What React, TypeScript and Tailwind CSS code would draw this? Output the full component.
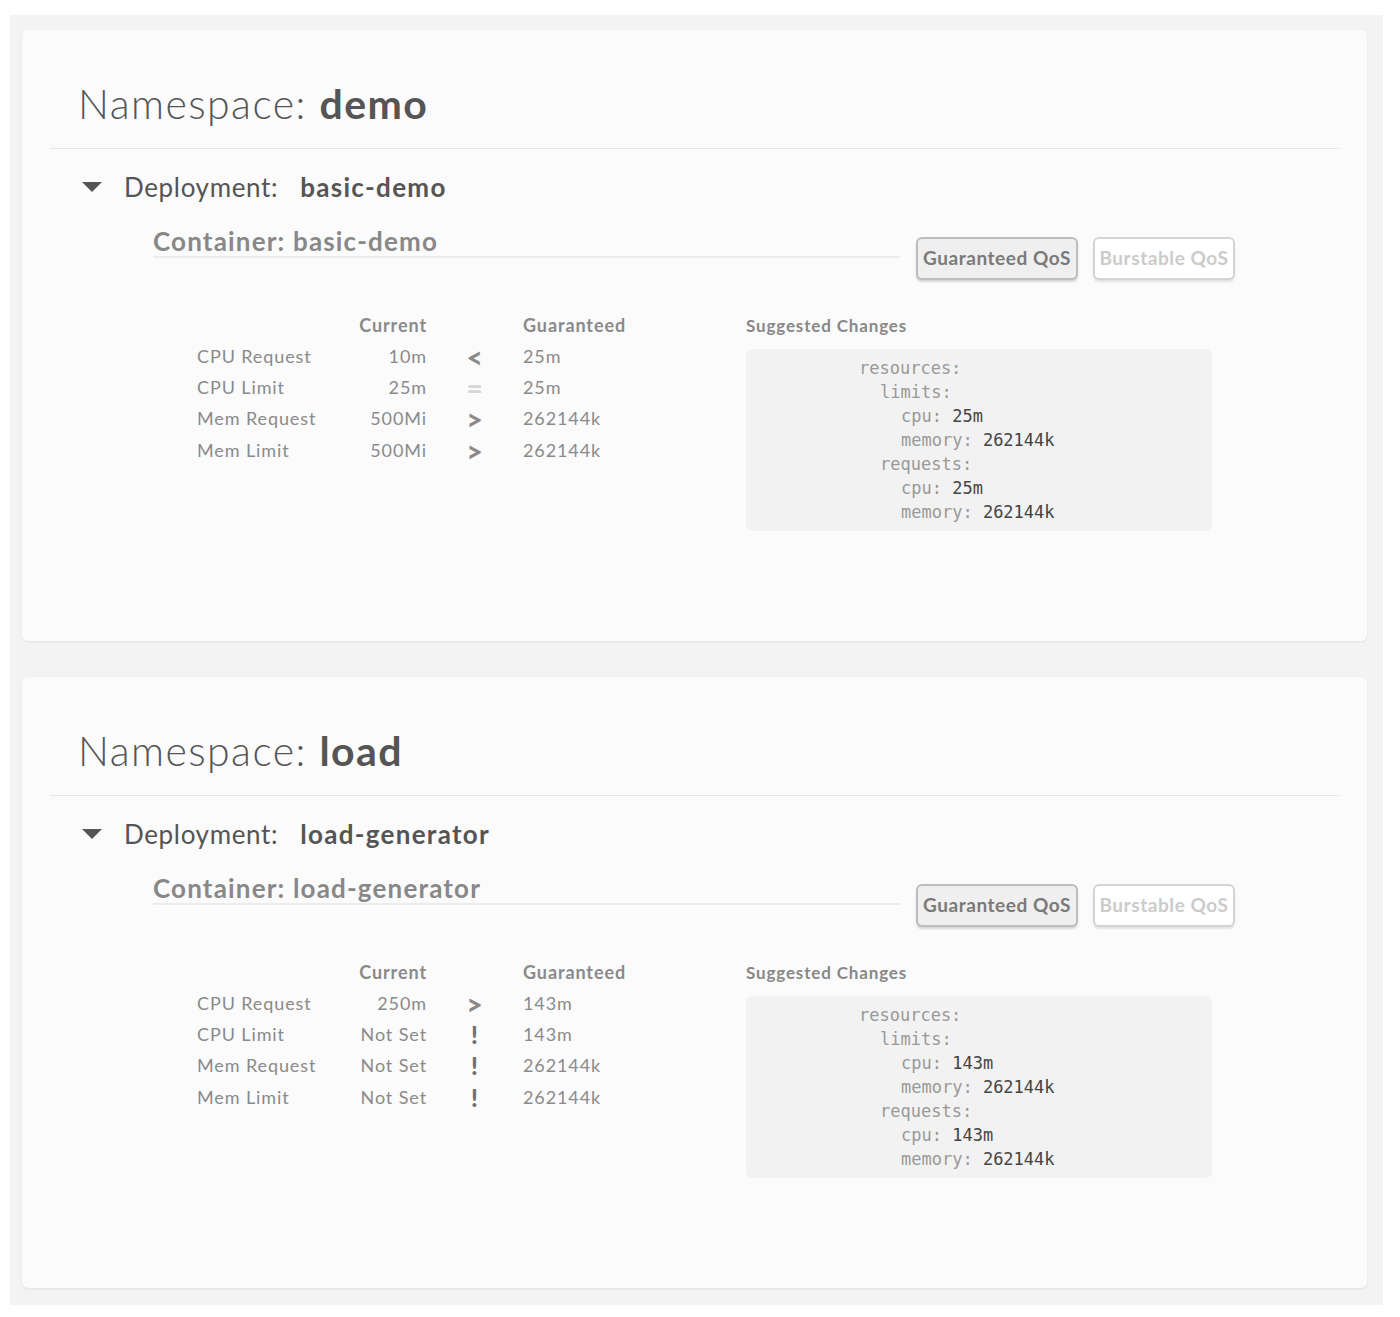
type Row = { label: string; current: string; sym: string; guaranteed: string };

type Card = {
  namespace: string;
  deployment: string;
  container: string;
  rows: Row[];
  cpu: string;
  memory: string;
};

const cards: Card[] = [
  {
    namespace: "demo",
    deployment: "basic-demo",
    container: "basic-demo",
    rows: [
      { label: "CPU Request", current: "10m", sym: "<", guaranteed: "25m" },
      { label: "CPU Limit", current: "25m", sym: "=", guaranteed: "25m" },
      { label: "Mem Request", current: "500Mi", sym: ">", guaranteed: "262144k" },
      { label: "Mem Limit", current: "500Mi", sym: ">", guaranteed: "262144k" },
    ],
    cpu: "25m",
    memory: "262144k",
  },
  {
    namespace: "load",
    deployment: "load-generator",
    container: "load-generator",
    rows: [
      { label: "CPU Request", current: "250m", sym: ">", guaranteed: "143m" },
      { label: "CPU Limit", current: "Not Set", sym: "!", guaranteed: "143m" },
      { label: "Mem Request", current: "Not Set", sym: "!", guaranteed: "262144k" },
      { label: "Mem Limit", current: "Not Set", sym: "!", guaranteed: "262144k" },
    ],
    cpu: "143m",
    memory: "262144k",
  },
];

function Symbol({ sym }: { sym: string }) {
  if (sym === "=") return <span className="block text-[28px] leading-[20px] font-bold text-[#d6d6d6]">=</span>;
  if (sym === "!") return <span className="block text-[24px] leading-[20px] font-black text-[#707070]">!</span>;
  return <span className="block text-[28px] leading-[20px] font-black text-[#8a8a8a]">{sym}</span>;
}

function NamespaceCard({ card }: { card: Card }) {
  return (
    <div className="ml-3 mr-4 rounded-md bg-[#fbfbfb] px-7 pt-[50px] pb-[110px] shadow-[0_1px_3px_rgba(0,0,0,0.08)]">
      {/* Header */}
      <h1 className="pl-7 text-[41px] leading-[48px] tracking-[0.035em] text-[#555]">
        <span className="font-light">Namespace: </span>
        <span className="font-bold">{card.namespace}</span>
      </h1>
      <div className="mt-5 h-px bg-[#e6e6e6]" />

      <div className="mt-[22px] flex h-8 items-center">
        <svg width="20" height="10" viewBox="0 0 20 10" className="ml-8">
          <path d="M0 0 L20 0 L10 10 Z" fill="#555" />
        </svg>
        <span className="ml-[22px] text-[26px] tracking-[0.025em] text-[#555]">Deployment:</span>
        <span className="ml-[22px] text-[26px] font-bold tracking-[0.05em] text-[#555]">{card.deployment}</span>
      </div>

      {/* Container */}
      <div className="ml-[103px] mt-[23px]">
        <div className="flex items-start">
          <div className="w-[747px] border-b-2 border-[#ececec]">
            <div className="text-[26px] font-bold leading-[30px] tracking-[0.045em] text-[#888]">
              Container: {card.container}
            </div>
          </div>
          <div className="ml-4 mt-[11px] flex gap-[15px]">
            <button className="h-[43px] w-[162px] rounded-md border-2 border-[#bdbdbd] bg-[#efefef] text-[19px] font-bold tracking-[0.03em] text-[#7a7a7a] shadow-[0_2px_2px_rgba(0,0,0,0.15)]">
              Guaranteed QoS
            </button>
            <button className="h-[43px] w-[142px] rounded-md border-2 border-[#d4d4d4] bg-white text-[19px] font-bold tracking-[0.03em] text-[#cbcbcb] shadow-[0_2px_2px_rgba(0,0,0,0.1)]">
              Burstable QoS
            </button>
          </div>
        </div>

        <div className="mt-[30px] flex">
          <div className="ml-11 grid w-[549px] grid-cols-[150px_80px_96px_auto] grid-rows-[31px_31px_31px_31px_33px] items-center text-[18px] tracking-[0.05em] text-[#8a8a8a]">
            <div />
            <div className="text-right font-bold">Current</div>
            <div />
            <div className="font-bold">Guaranteed</div>
            {card.rows.map((r) => (
              <div key={r.label} className="contents">
                <div>{r.label}</div>
                <div className="text-right">{r.current}</div>
                <div className="flex items-center justify-center">
                  <Symbol sym={r.sym} />
                </div>
                <div>{r.guaranteed}</div>
              </div>
            ))}
          </div>

          <div className="pt-1">
            <div className="mb-[11px] text-[17px] font-bold leading-[24px] tracking-[0.05em] text-[#888]">
              Suggested Changes
            </div>
            <pre className="w-[466px] rounded-md bg-[#f2f2f2] py-[7px] pl-[113px] font-['DejaVu_Sans_Mono',monospace] text-[17px] leading-[24px] text-[#999]">
              <div>resources:</div>
              <div className="pl-[21px]">limits:</div>
              <div className="pl-[42px]">
                cpu: <span className="text-[#444]">{card.cpu}</span>
              </div>
              <div className="pl-[42px]">
                memory: <span className="text-[#444]">{card.memory}</span>
              </div>
              <div className="pl-[21px]">requests:</div>
              <div className="pl-[42px]">
                cpu: <span className="text-[#444]">{card.cpu}</span>
              </div>
              <div className="pl-[42px]">
                memory: <span className="text-[#444]">{card.memory}</span>
              </div>
            </pre>
          </div>
        </div>
      </div>
    </div>
  );
}

export default function App() {
  return (
    <div className="min-h-[1317px] bg-white pt-[15px] font-['Lato',sans-serif]">
      <div className="ml-[10px] w-[1373px] space-y-[36px] bg-[#f3f3f3] pt-[15px] pb-[17px]">
        {cards.map((c) => (
          <NamespaceCard key={c.namespace} card={c} />
        ))}
      </div>
    </div>
  );
}
